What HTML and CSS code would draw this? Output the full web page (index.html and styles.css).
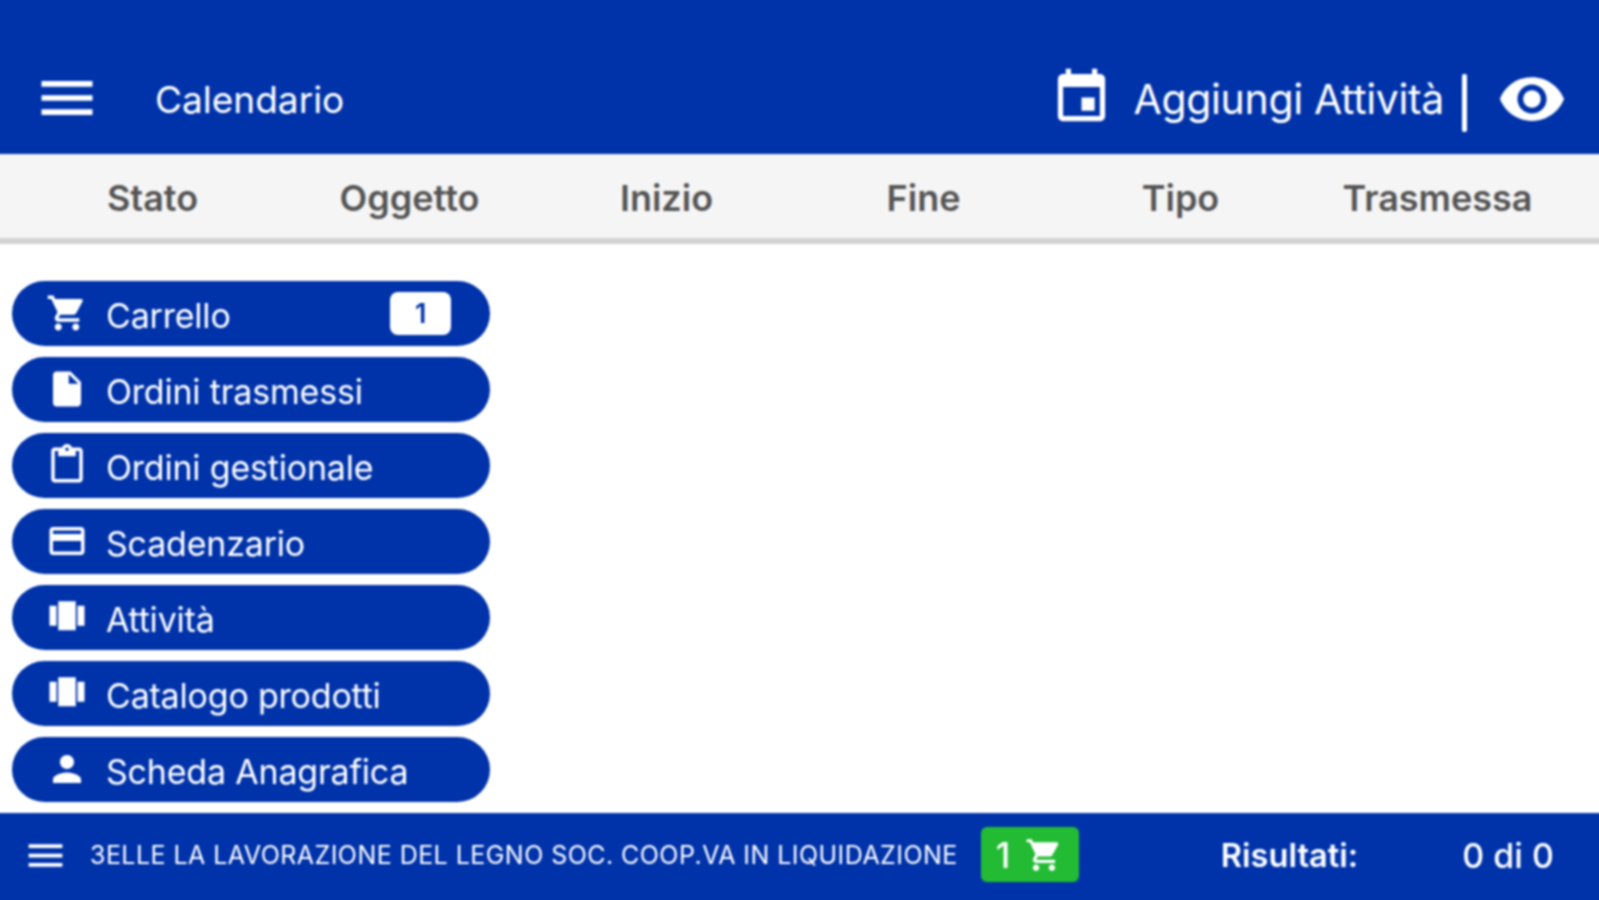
FILE: index.html
```html
<!DOCTYPE html>
<html lang="it">
<head>
  <meta charset="UTF-8"/>
  <meta name="viewport" content="width=device-width, initial-scale=1.0"/>
  <title>Calendario</title>
  <link rel="stylesheet" href="styles.css">
</head>
<body>
  <div class="app">

    <!-- Top bar -->
    <header class="topbar">
      <svg class="ico-menu" viewBox="0 0 24 24"><path d="M3 18h18v-2H3v2zm0-5h18v-2H3v2zm0-7v2h18V6H3z"/></svg>
      <span class="title">Calendario</span>
      <svg class="ico-event" viewBox="0 0 24 24"><path d="M17 12h-5v5h5v-5zM16 1v2H8V1H6v2H5c-1.11 0-1.99.9-1.99 2L3 19c0 1.1.89 2 2 2h14c1.1 0 2-.9 2-2V5c0-1.1-.9-2-2-2h-1V1h-2zm3 18H5V8h14v11z"/></svg>
      <span class="add">Aggiungi Attività</span>
      <span class="sep"></span>
      <svg class="ico-eye" viewBox="0 0 24 24"><path d="M12 4.5C7 4.5 2.73 7.61 1 12c1.73 4.39 6 7.5 11 7.5s9.27-3.11 11-7.5c-1.73-4.39-6-7.5-11-7.5zM12 17c-2.76 0-5-2.24-5-5s2.24-5 5-5 5 2.24 5 5-2.24 5-5 5zm0-8c-1.66 0-3 1.34-3 3s1.34 3 3 3 3-1.34 3-3-1.34-3-3-3z"/></svg>
    </header>

    <!-- Table head -->
    <div class="cols">
      <span>Stato</span>
      <span>Oggetto</span>
      <span>Inizio</span>
      <span>Fine</span>
      <span>Tipo</span>
      <span>Trasmessa</span>
    </div>

    <!-- Menu -->
    <main class="menu">
      <a class="pill">
        <svg viewBox="0 0 24 24"><path d="M7 18c-1.1 0-1.99.9-1.99 2S5.9 22 7 22s2-.9 2-2-.9-2-2-2zM1 2v2h2l3.6 7.59-1.35 2.45c-.16.28-.25.61-.25.96 0 1.1.9 2 2 2h12v-2H7.42c-.14 0-.25-.11-.25-.25l.03-.12.9-1.63h7.45c.75 0 1.41-.41 1.75-1.03l3.58-6.49c.08-.14.12-.31.12-.48 0-.55-.45-1-1-1H5.21l-.94-2H1zm16 16c-1.1 0-1.99.9-1.99 2s.89 2 1.99 2 2-.9 2-2-.9-2-2-2z"/></svg>
        <span>Carrello</span>
        <b class="badge">1</b>
      </a>
      <a class="pill">
        <svg viewBox="0 0 24 24"><path d="M6 2c-1.1 0-1.99.9-1.99 2L4 20c0 1.1.89 2 1.99 2H18c1.1 0 2-.9 2-2V8l-6-6H6zm7 7V3.5L18.5 9H13z"/></svg>
        <span>Ordini trasmessi</span>
      </a>
      <a class="pill">
        <svg viewBox="0 0 24 24"><path d="M19 2h-4.18C14.4.84 13.3 0 12 0c-1.3 0-2.4.84-2.82 2H5c-1.1 0-2 .9-2 2v16c0 1.1.9 2 2 2h14c1.1 0 2-.9 2-2V4c0-1.1-.9-2-2-2zm-7 0c.55 0 1 .45 1 1s-.45 1-1 1-1-.45-1-1 .45-1 1-1zm7 18H5V4h2v3h10V4h2v16z"/></svg>
        <span>Ordini gestionale</span>
      </a>
      <a class="pill">
        <svg viewBox="0 0 24 24"><path d="M20 4H4c-1.11 0-1.99.89-1.99 2L2 18c0 1.11.89 2 2 2h16c1.11 0 2-.89 2-2V6c0-1.11-.89-2-2-2zm0 14H4v-6h16v6zm0-10H4V6h16v2z"/></svg>
        <span>Scadenzario</span>
      </a>
      <a class="pill">
        <svg viewBox="0 0 24 24"><path d="M7 19.500h10V3H7zM2 17h4V5.500H2zM18 5.500V17h4V5.500z"/></svg>
        <span>Attività</span>
      </a>
      <a class="pill">
        <svg viewBox="0 0 24 24"><path d="M7 19.500h10V3H7zM2 17h4V5.500H2zM18 5.500V17h4V5.500z"/></svg>
        <span>Catalogo prodotti</span>
      </a>
      <a class="pill">
        <svg viewBox="0 0 24 24"><path d="M12 12c2.210 0 4-1.790 4-4s-1.790-4-4-4-4 1.790-4 4 1.790 4 4 4zm0 2c-2.670 0-8 1.340-8 4v2h16v-2c0-2.660-5.330-4-8-4z"/></svg>
        <span>Scheda Anagrafica</span>
      </a>
    </main>

    <!-- Bottom bar -->
    <footer class="bottombar">
      <svg class="ico-menu-sm" viewBox="0 0 24 24"><path d="M3 18h18v-2H3v2zm0-5h18v-2H3v2zm0-7v2h18V6H3z"/></svg>
      <span class="company">3ELLE LA LAVORAZIONE DEL LEGNO SOC. COOP.VA IN LIQUIDAZIONE</span>
      <span class="cart-chip">
        <b>1</b>
        <svg viewBox="0 0 24 24"><path d="M7 18c-1.1 0-1.99.9-1.99 2S5.9 22 7 22s2-.9 2-2-.9-2-2-2zM1 2v2h2l3.6 7.59-1.35 2.45c-.16.28-.25.61-.25.96 0 1.1.9 2 2 2h12v-2H7.42c-.14 0-.25-.11-.25-.25l.03-.12.9-1.63h7.45c.75 0 1.41-.41 1.75-1.03l3.58-6.49c.08-.14.12-.31.12-.48 0-.55-.45-1-1-1H5.21l-.94-2H1zm16 16c-1.1 0-1.99.9-1.99 2s.89 2 1.99 2 2-.9 2-2-.9-2-2-2z"/></svg>
      </span>
      <span class="res-label">Risultati:</span>
      <span class="res-value">0 di 0</span>
    </footer>

  </div>
</body>
</html>
```

FILE: styles.css
```css
* {
  box-sizing: border-box;
  margin: 0; padding: 0;
  font-family: Inter, "Liberation Sans", sans-serif;
}

html, body {
  background: #fff;
  overflow: hidden;
  height: 100%;
}

/* 4px bleed on every side so the blur doesn't fade at the window edge */
.app {
  width: calc(100% + 8px);
  height: 908px;
  margin: -4px;
  display: flex;
  flex-direction: column;
  filter: blur(1px);
}

svg {
  fill: currentColor;
  flex: none;
}

/* top bar */
.topbar {
  height: 158px;
  flex: none;
  background: #0033aa;
  color: #fff;
  display: flex;
  align-items: center;
  padding: 48px 36px 0 37px;
}

.ico-menu { width: 68px; height: 68px; margin-top: -2px; }

.title {
  font-size: 37px;
  margin-left: 54px;
  margin-right: auto;
}

.ico-event { width: 63px; height: 63px; margin-top: -4px; }

.add {
  font-size: 41px;
  margin-left: 21px;
  letter-spacing: -0.35px;
}

.sep {
  width: 5px;
  height: 58px;
  background: #fff;
  margin: 8px 30px 0 18px;
  border-radius: 2px;
}

.ico-eye { width: 70px; height: 70px; }

/* table head */
.cols {
  height: 90px;
  flex: none;
  background: #f5f5f5;
  border-bottom: 6px solid #d2d2d2;
  display: grid;
  grid-template-columns: repeat(6, 257px);
  padding: 3px 0 0 28px;
  align-items: center;
  text-align: center;
  font-size: 36px;
  font-weight: 600;
  color: #555;
}

/* menu pills */
.menu {
  flex: 1;
  display: flex;
  flex-direction: column;
  gap: 11px;
  padding: 37px 0 0 16px;
}

.pill {
  width: 478px;
  height: 65px;
  background: #0033aa;
  color: #fff;
  border-radius: 33px;
  display: flex;
  align-items: center;
  padding: 0 39px 0 34px;
  font-size: 34px;
  letter-spacing: -0.2px;
}

.pill svg { width: 42px; height: 42px; margin-right: 18px; margin-top: -2px; }
.pill span { margin-top: 4px; }

.badge {
  margin-left: auto;
  width: 61px;
  height: 43px;
  background: #fff;
  color: #0033aa;
  border-radius: 8px;
  font-size: 27px;
  font-weight: 600;
  text-align: center;
  line-height: 43px;
}

/* bottom bar */
.bottombar {
  height: 91px;
  flex: none;
  background: #0033aa;
  color: #fff;
  display: flex;
  align-items: center;
  padding: 0 0 7px 27px;
}

.ico-menu-sm { width: 45px; height: 45px; }

.company {
  font-size: 25px;
  margin-left: 22px;
  white-space: nowrap;
  letter-spacing: 0.45px;
}

.cart-chip {
  width: 98px;
  height: 55px;
  margin: -1px 0 0 23px;
  background: #22bb33;
  border-radius: 6px;
  display: flex;
  align-items: center;
  gap: 15px;
  padding-left: 15px;
}

.cart-chip b { font-size: 35px; font-weight: 500; }
.cart-chip svg { width: 38px; height: 38px; }

.res-label {
  font-size: 32.6px;
  font-weight: 600;
  margin-left: 142px;
}

.res-value {
  font-size: 34px;
  font-weight: 500;
  margin-left: 104px;
}
```
